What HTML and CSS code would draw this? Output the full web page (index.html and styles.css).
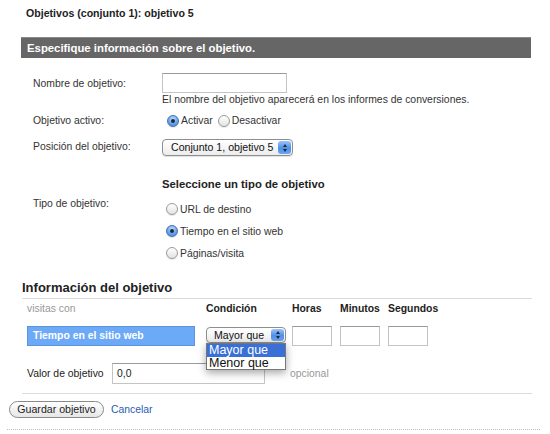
FILE: index.html
```html
<!DOCTYPE html>
<html lang="es">
<head>
<meta charset="utf-8">
<title>Objetivo 5</title>
<link rel="stylesheet" href="styles.css">
</head>
<body>
<div class="page">
  <h1 class="title">Objetivos (conjunto 1): objetivo 5</h1>
  <div class="bar">Especifique información sobre el objetivo.</div>

  <div class="form">
    <div class="row row-name">
      <div class="label">Nombre de objetivo:</div>
      <div class="value">
        <div class="textbox name-box"></div>
        <div class="help">El nombre del objetivo aparecerá en los informes de conversiones.</div>
      </div>
    </div>

    <div class="row row-active">
      <div class="label">Objetivo activo:</div>
      <div class="value inline">
        <span class="radio checked first"></span><span class="opt">Activar</span>
        <span class="radio"></span><span class="opt">Desactivar</span>
      </div>
    </div>

    <div class="row row-pos">
      <div class="label">Posición del objetivo:</div>
      <div class="value">
        <div class="select pos-select"><span class="sel-text">Conjunto 1, objetivo 5</span><span class="sel-arrow"><span class="up"></span><span class="down"></span></span></div>
      </div>
    </div>

    <div class="row row-type">
      <div class="label type-label">Tipo de objetivo:</div>
      <div class="value">
        <div class="type-head">Seleccione un tipo de objetivo</div>
        <div class="type-list">
          <div class="type-opt"><span class="radio"></span><span class="opt">URL de destino</span></div>
          <div class="type-opt"><span class="radio checked"></span><span class="opt">Tiempo en el sitio web</span></div>
          <div class="type-opt"><span class="radio"></span><span class="opt">Páginas/visita</span></div>
        </div>
      </div>
    </div>
  </div>

  <h2 class="section">Información del objetivo</h2>

  <div class="details">
    <div class="dh muted">visitas con</div>
    <div class="dh">Condición</div>
    <div class="dh">Horas</div>
    <div class="dh">Minutos</div>
    <div class="dh">Segundos</div>

    <div class="visit-box">Tiempo en el sitio web</div>
    <div class="cond">
      <div class="select cond-select"><span class="sel-text">Mayor que</span><span class="sel-arrow"><span class="up"></span><span class="down"></span></span></div>
      <div class="dropdown">
        <div class="dd-item active">Mayor que</div>
        <div class="dd-item">Menor que</div>
      </div>
    </div>
    <div class="textbox time-box"></div>
    <div class="textbox time-box"></div>
    <div class="textbox time-box"></div>
  </div>

  <div class="value-row">
    <span class="value-label">Valor de objetivo</span>
    <div class="textbox value-box">0,0</div>
    <span class="muted optional">opcional</span>
  </div>

  <div class="actions">
    <span class="button">Guardar objetivo</span>
    <a class="cancel" href="#">Cancelar</a>
  </div>
  <div class="dotted"></div>
</div>
</body>
</html>
```

FILE: styles.css
```css
html, body {
  margin: 0;
  padding: 0;
  background: #fff;
}

body {
  font-family: "Liberation Sans", Arial, sans-serif;
  font-size: 10.4px;
  color: #333;
}

.page {
  width: 550px;
  height: 434px;
  overflow: hidden;
  position: relative;
}

.title {
  margin: 0;
  padding: 6px 0 0 26px;
  font-size: 10.6px;
  line-height: 14px;
  font-weight: bold;
  color: #222;
}

.bar {
  margin: 17px 0 0 21px;
  width: 510px;
  height: 21px;
  padding-left: 6px;
  background: #666;
  border-top: 1px solid #8a8a8a;
  box-sizing: border-box;
  color: #fff;
  font-weight: bold;
  font-size: 11.35px;
  line-height: 20px;
  white-space: nowrap;
}

.form {
  padding-left: 33px;
}

.row {
  display: flex;
  align-items: flex-start;
}

.label {
  width: 129px;
  flex: none;
  line-height: 14px;
}

.row-name {
  margin-top: 15px;
}

.row-name .label {
  margin-top: 4px;
}

.textbox {
  box-sizing: border-box;
  border: 1px solid #c4c4c4;
  border-top-color: #9a9a9a;
  background: #fff;
}

.name-box {
  width: 125px;
  height: 20px;
}

.help {
  line-height: 14px;
  color: #333;
  white-space: nowrap;
}

.row-active {
  margin-top: 6px;
}

.row-active .label,
.inline {
  line-height: 16px;
}

.inline {
  display: flex;
  align-items: center;
}

.radio {
  display: inline-block;
  width: 12px;
  height: 12px;
  box-sizing: border-box;
  border-radius: 50%;
  border: 1px solid #9a9a9a;
  background: linear-gradient(#ffffff, #e2e2e2);
  position: relative;
  flex: none;
  margin-right: 2px;
  box-shadow: 0 1px 1px rgba(0, 0, 0, 0.1);
}

.radio.checked {
  border-color: #4672b0;
  background: radial-gradient(circle at 50% 30%, #c0dcfc, #6aa3ec 55%, #3a78d4);
}

.radio.checked::after {
  content: "";
  position: absolute;
  left: 3px;
  top: 3px;
  width: 4px;
  height: 4px;
  border-radius: 50%;
  background: #1a2a40;
}

.radio.first {
  margin-left: 5px;
}

.inline .opt {
  margin-right: 5px;
}

.row-pos {
  margin-top: 10px;
}

.row-pos .label {
  margin-top: 1px;
}

.select {
  display: flex;
  align-items: center;
  box-sizing: border-box;
  border: 1px solid #8e8e8e;
  border-radius: 4px;
  background: linear-gradient(#ffffff, #ececec);
  height: 17px;
  color: #111;
  white-space: nowrap;
  box-shadow: 0 1px 1px rgba(0, 0, 0, 0.12);
}

.sel-text {
  flex: 1;
  padding-left: 8px;
  line-height: 15px;
  font-size: 10.6px;
}

.sel-arrow {
  width: 13px;
  height: 13px;
  margin-right: 1px;
  border-radius: 3px;
  background: linear-gradient(#9cc4f7, #4f8fe6 55%, #6aa6f3);
  display: flex;
  flex-direction: column;
  align-items: center;
  justify-content: center;
  gap: 2px;
}

.up {
  width: 0;
  height: 0;
  border-left: 2px solid transparent;
  border-right: 2px solid transparent;
  border-bottom: 3px solid #1b2a44;
}

.down {
  width: 0;
  height: 0;
  border-left: 2px solid transparent;
  border-right: 2px solid transparent;
  border-top: 3px solid #1b2a44;
}

.pos-select {
  width: 131px;
}

.row-type {
  margin-top: 21px;
}

.type-label {
  margin-top: 20px;
}

.type-head {
  font-weight: bold;
  font-size: 11.3px;
  line-height: 14px;
  color: #222;
  white-space: nowrap;
}

.type-list {
  margin-top: 7px;
}

.type-opt {
  display: flex;
  align-items: center;
  height: 22px;
}

.type-opt .radio {
  margin-left: 4px;
  margin-right: 2px;
}

.section {
  margin: 15px 0 0 22px;
  width: 510px;
  font-size: 13px;
  line-height: 18px;
  font-weight: bold;
  color: #222;
  border-bottom: 1px solid #dcdcdc;
  padding-bottom: 1px;
}

.details {
  display: grid;
  grid-template-columns: 179px 86px 48px 48px 48px;
  grid-template-rows: 14px 20px;
  row-gap: 10px;
  margin: 3px 0 0 27px;
}

.dh {
  font-weight: bold;
  color: #222;
  line-height: 14px;
  white-space: nowrap;
}

.muted {
  color: #999;
  font-weight: normal;
}

.visit-box {
  width: 168px;
  height: 20px;
  box-sizing: border-box;
  background: #6ca9f6;
  border: 1px solid #5b95e0;
  color: #fff;
  font-weight: bold;
  line-height: 18px;
  padding-left: 5px;
}

.cond {
  position: relative;
  padding-top: 1px;
}

.cond-select {
  width: 80px;
  height: 16px;
}

.cond-select .sel-text {
  padding-left: 7px;
  line-height: 14px;
}

.cond-select .sel-arrow {
  height: 12px;
}

.dropdown {
  position: absolute;
  left: 0;
  top: 17px;
  width: 80px;
  box-sizing: border-box;
  border: 1px solid #777;
  background: #fff;
  box-shadow: 0 3px 8px rgba(0, 0, 0, 0.35);
  z-index: 2;
  font-size: 12.5px;
}

.dd-item {
  height: 12px;
  line-height: 12px;
  padding-left: 2px;
  color: #111;
}

.dd-item.active {
  background: #3a6fd6;
  color: #fff;
  height: 13px;
  line-height: 13px;
}

.time-box {
  width: 40px;
  height: 20px;
}

.value-row {
  display: flex;
  align-items: center;
  margin: 17px 0 0 27px;
  height: 21px;
}

.value-label {
  width: 85px;
  flex: none;
  color: #222;
}

.value-box {
  width: 153px;
  height: 21px;
  line-height: 19px;
  padding-left: 4px;
  color: #222;
}

.optional {
  margin-left: 25px;
}

.actions {
  display: flex;
  align-items: center;
  margin-top: 9px;
  padding: 8px 0 0 9px;
  position: relative;
}

.actions::before {
  content: "";
  position: absolute;
  left: 22px;
  top: 0;
  width: 510px;
  border-top: 1px solid #dcdcdc;
}

.button {
  display: inline-block;
  box-sizing: border-box;
  width: 95px;
  height: 17px;
  text-align: center;
  line-height: 15px;
  border: 1px solid #8a8a8a;
  border-radius: 9px;
  background: linear-gradient(#ffffff, #e6e6e6);
  color: #222;
  font-size: 10.6px;
}

.cancel {
  margin-left: 7px;
  color: #2a5db0;
  text-decoration: none;
}

.dotted {
  margin: 11px 0 0 7px;
  width: 533px;
  border-top: 1px dotted #bbb;
}
```
